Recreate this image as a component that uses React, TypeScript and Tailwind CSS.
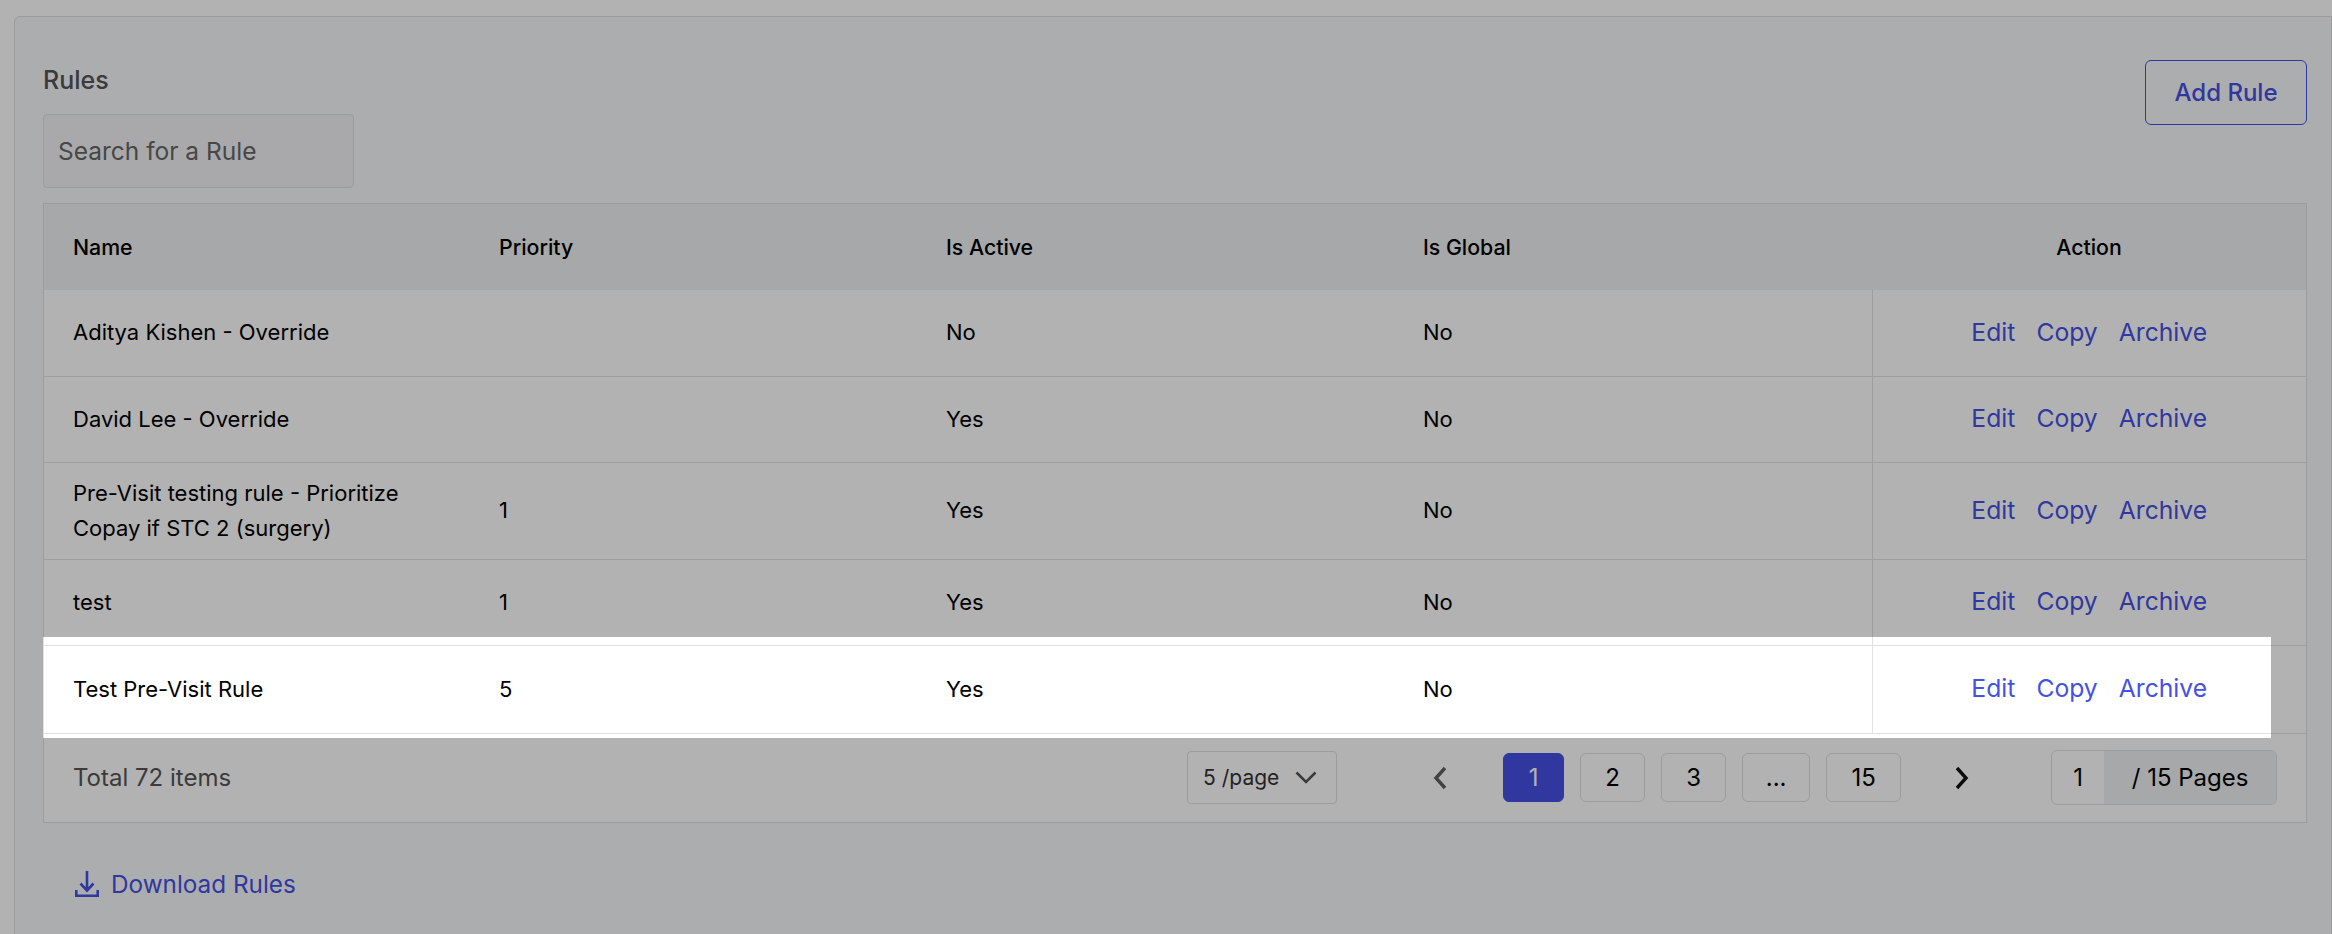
import React from "react";

const rows = [
  { name: "Aditya Kishen - Override", priority: "", active: "No", h: "h-[86px]" },
  { name: "David Lee - Override", priority: "", active: "Yes", h: "h-[86px]" },
  { name: "Pre-Visit testing rule - Prioritize Copay if STC 2 (surgery)", priority: "1", active: "Yes", h: "h-[97px]" },
  { name: "test", priority: "1", active: "Yes", h: "h-[86px]" },
  { name: "Test Pre-Visit Rule", priority: "5", active: "Yes", h: "h-[88px]" },
];

const pages = [
  { label: "1", w: "w-[61px]", on: true },
  { label: "2", w: "w-[65px]" },
  { label: "3", w: "w-[65px]" },
  { label: "...", w: "w-[68px]" },
  { label: "15", w: "w-[75px]" },
];

export default function App() {
  return (
    <div className="relative h-[934px] w-[2332px] overflow-hidden bg-white font-['Inter',sans-serif] text-[22px] leading-[35px] text-black">
      <div className="ml-[14px] mt-[16px] h-[1000px] rounded-tl-md border border-[#dedfe2] bg-[#f7f8fa] pl-[28px] pr-[24px] pt-[46px]">
        <div className="flex items-start justify-between">
          <div>
            <h2 className="text-[25px] font-medium leading-[35px] text-[#555]">Rules</h2>
            <div className="mt-[16px] flex h-[74px] w-[311px] items-center rounded border border-[#dfe0e2] bg-[#f2f3f5] pl-[14px] text-[24.5px] text-[#666]">Search for a Rule</div>
          </div>
          <button className="-mt-[3px] h-[65px] w-[162px] rounded-md border border-[#4551e5] text-center text-[24px] font-medium text-[#4551e5]">Add Rule</button>
        </div>
        <div className="mt-[15px] w-[2264px] border border-[#dfe0e2] bg-white">
          <table className="w-full table-fixed border-collapse">
            <colgroup>
              <col className="w-[426px]" />
              <col className="w-[447px]" />
              <col className="w-[477px]" />
              <col className="w-[478px]" />
              <col />
            </colgroup>
            <thead>
              <tr className="h-[86px] bg-[#f0f1f3] text-left text-[21.3px]">
                <th className="pl-[29px] font-medium">Name</th>
                <th className="pl-[29px] font-medium">Priority</th>
                <th className="pl-[29px] font-medium">Is Active</th>
                <th className="pl-[29px] font-medium">Is Global</th>
                <th className="text-center font-medium">Action</th>
              </tr>
            </thead>
            <tbody>
              {rows.map((r) => (
                <tr key={r.name} className={`${r.h} border-b border-[#e2e2e2]`}>
                  <td className="pl-[29px] pr-[40px]">{r.name}</td>
                  <td className="pl-[29px]">{r.priority}</td>
                  <td className="pl-[29px]">{r.active}</td>
                  <td className="pl-[29px]">No</td>
                  <td className="border-l border-[#e2e2e2] text-center text-[#4551e5]">
                    <span className="inline-flex gap-[21px] text-[24.7px]">
                      <span>Edit</span>
                      <span>Copy</span>
                      <span>Archive</span>
                    </span>
                  </td>
                </tr>
              ))}
            </tbody>
          </table>
          <div className="flex h-[88px] items-center pl-[29px] text-[24px] text-[#555]">
            <span>Total 72 items</span>
            <div className="ml-[956px] flex h-[53px] w-[150px] items-center rounded border border-[#dfe0e2] pl-[15px] text-[21px] text-[#333]">
              5 /page
              <svg className="ml-[16px]" width="22" height="13" viewBox="0 0 22 13" fill="none" stroke="#555" strokeWidth="2.6"><path d="M1.5 1.5L11 11l9.5-9.5" /></svg>
            </div>
            <svg className="ml-[96px]" width="14" height="24" viewBox="0 0 14 24" fill="none" stroke="#5f5f5f" strokeWidth="3.4"><path d="M12 2L3 12l9 10" /></svg>
            <div className="ml-[56px] flex gap-[16px] text-black">
              {pages.map((p) => (
                <div key={p.label} className={`flex h-[49px] ${p.w} items-center justify-center rounded-md border ${p.on ? "border-[#4551e5] bg-[#4551e5] text-white" : "border-[#dfe0e2]"}`}>{p.label}</div>
              ))}
            </div>
            <svg className="ml-[54px]" width="14" height="24" viewBox="0 0 14 24" fill="none" stroke="#111" strokeWidth="3.4"><path d="M2 2l9 10L2 22" /></svg>
            <div className="ml-[82px] flex h-[55px] w-[226px] overflow-hidden rounded-md border border-[#dfe0e2] text-black">
              <div className="flex w-[52px] items-center justify-center">1</div>
              <div className="flex flex-1 items-center justify-center bg-[#f0f1f3]">/ 15 Pages</div>
            </div>
          </div>
        </div>
        <div className="ml-[32px] mt-[44px] flex items-center gap-[12px] text-[24.3px] text-[#4551e5]">
          <svg width="24" height="26" viewBox="0 0 24 26" fill="none" stroke="#4551e5" strokeWidth="2.6"><path d="M12 0v19M5.5 12.5L12 19.5l6.5-7" /><path d="M1.3 19v5.7h21.4V19" /></svg>
          <span>Download Rules</span>
        </div>
      </div>
      <div className="absolute left-[43px] top-[637px] h-[101px] w-[2228px] shadow-[0_0_0_3000px_rgba(0,0,0,0.3)]" />
    </div>
  );
}
